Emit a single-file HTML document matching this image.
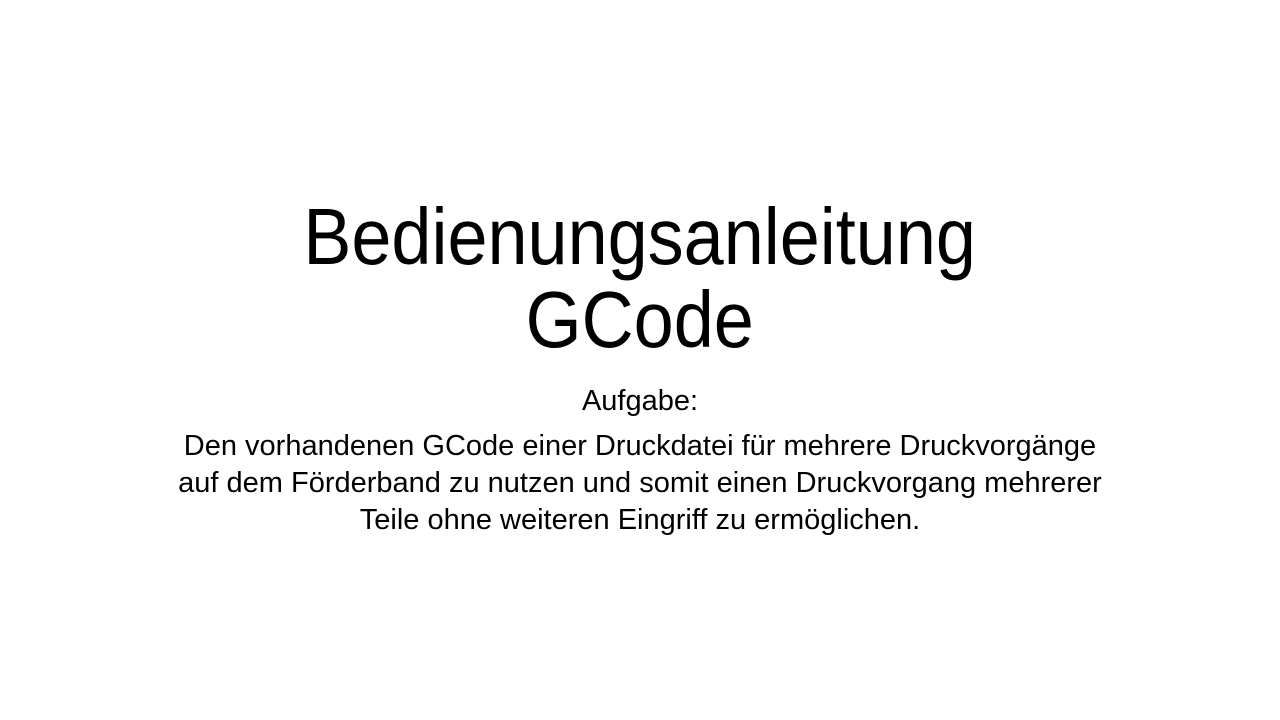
<!DOCTYPE html>
<html><head><meta charset="utf-8"><style>
html,body{margin:0;padding:0;background:#fff;}
body{width:1280px;height:720px;position:relative;overflow:hidden;font-family:"Liberation Sans",sans-serif;color:#000;}
.l{position:absolute;left:0;width:1280px;text-align:center;white-space:nowrap;}
.l span{display:inline-block;transform-origin:center;}
.t{font-size:80px;line-height:80px;}
.t span{transform:scaleX(0.90);}
.b{font-size:29px;line-height:29px;}
</style></head><body>
<div class="l t" style="top:197px"><span>Bedienungsanleitung</span></div>
<div class="l t" style="top:280px"><span>GCode</span></div>
<div class="l b" style="top:387px"><span>Aufgabe:</span></div>
<div class="l b" style="top:432px"><span>Den vorhandenen GCode einer Druckdatei für mehrere Druckvorgänge</span></div>
<div class="l b" style="top:469px"><span>auf dem Förderband zu nutzen und somit einen Druckvorgang mehrerer</span></div>
<div class="l b" style="top:506px"><span>Teile ohne weiteren Eingriff zu ermöglichen.</span></div>
</body></html>
